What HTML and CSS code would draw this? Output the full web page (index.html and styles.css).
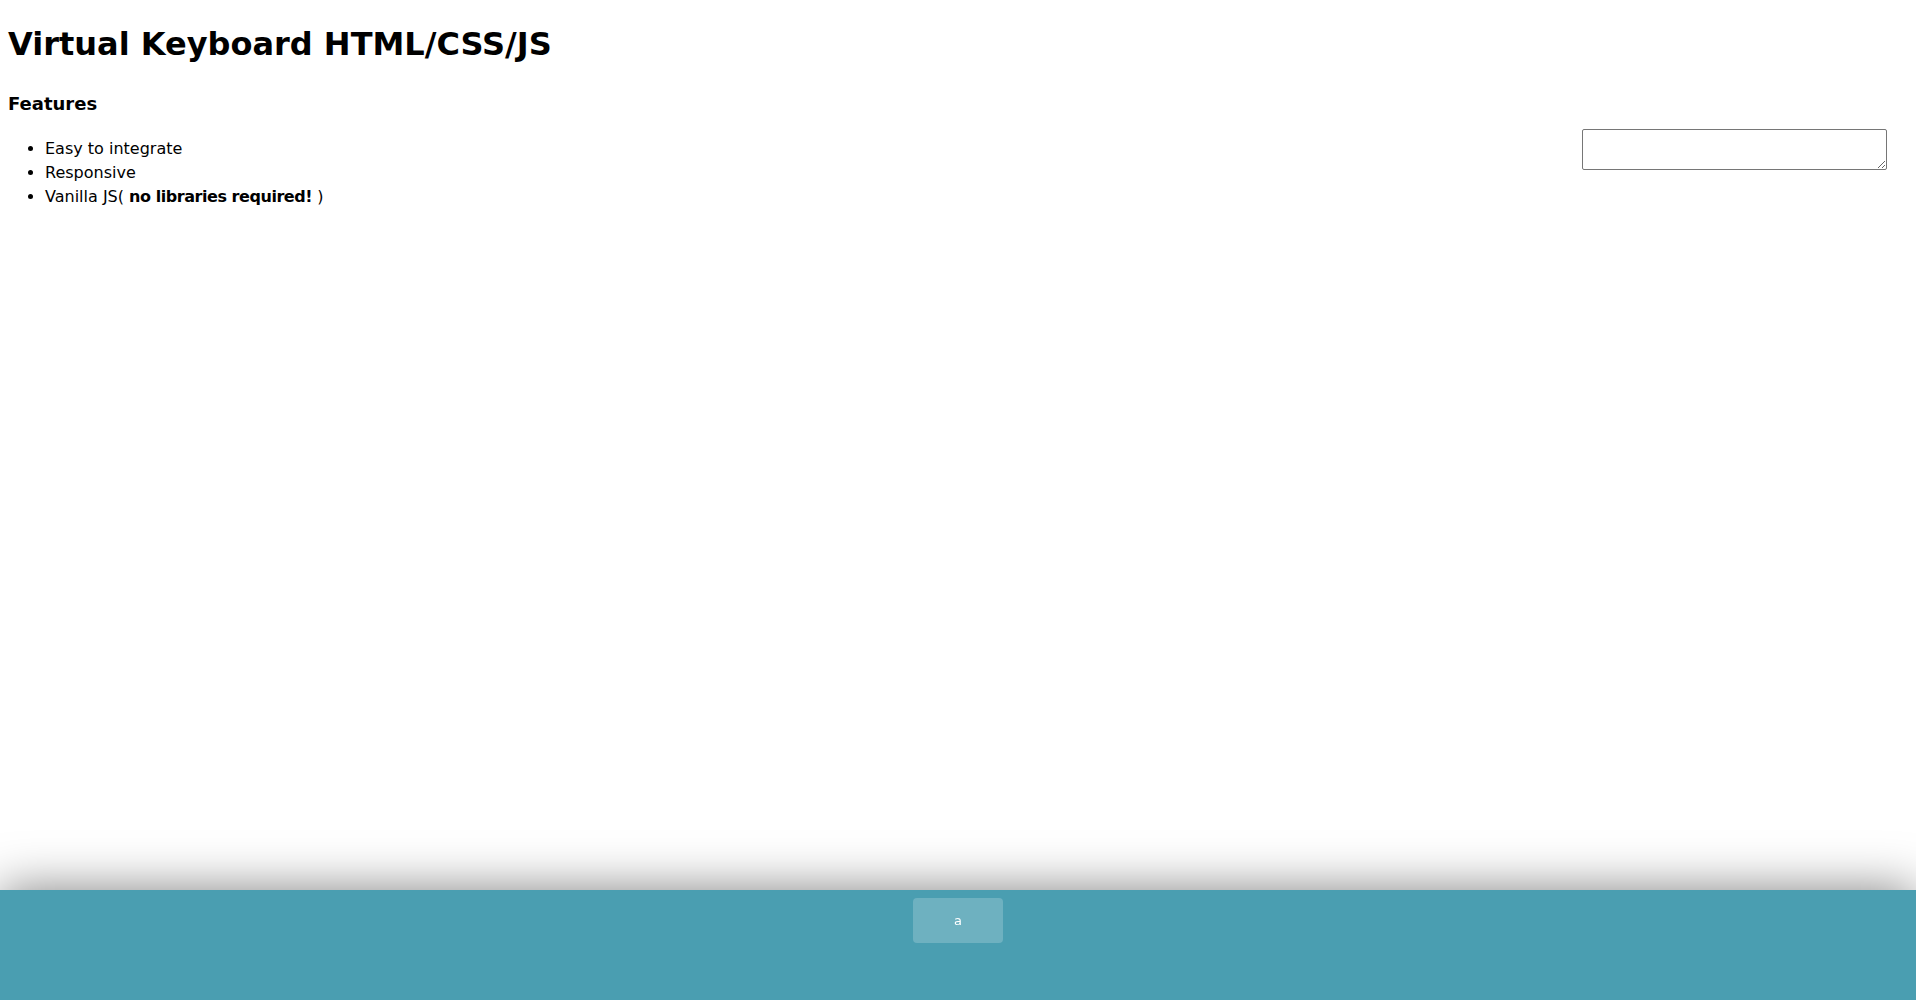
FILE: index.html
```html
<!DOCTYPE html>
<html lang="en">
<head>
<meta charset="utf-8">
<title>Virtual Keyboard</title>
<link rel="stylesheet" href="styles.css">
</head>
<body>
<div class="page">
  <h1 class="title">Virtual Keyboard HTML/CSS/JS</h1>
  <h2 class="subtitle">Features</h2>
  <div class="content">
    <ul class="features">
      <li>Easy to integrate</li>
      <li>Responsive</li>
      <li>Vanilla JS( <strong>no libraries required!</strong> )</li>
    </ul>
    <textarea class="use-keyboard-input"></textarea>
  </div>
</div>
<div class="keyboard">
  <div class="keyboard__keys">
    <button type="button" class="keyboard__key">a</button>
  </div>
</div>
</body>
</html>
```

FILE: styles.css
```css
html, body {
  margin: 0;
  padding: 0;
  background: #ffffff;
}

body {
  font-family: "DejaVu Sans", "Noto Sans", sans-serif;
  color: #000;
}

.page {
  padding: 0 8px;
}

.title {
  margin: 24.7px 0 0 0;
  font-size: 32px;
  line-height: 38.4px;
  font-weight: 700;
}

.subtitle {
  margin: 28.7px 0 0 0;
  font-size: 18px;
  line-height: 24px;
  font-weight: 700;
}

.content {
  display: flex;
  justify-content: space-between;
  align-items: flex-start;
}

.features {
  margin: 21.5px 0 0 0;
  padding-left: 37px;
  font-size: 16px;
  line-height: 23.7px;
}

.features strong {
  font-weight: 700;
  letter-spacing: -0.45px;
}

.use-keyboard-input {
  box-sizing: border-box;
  width: 305px;
  height: 41px;
  margin: 13.5px 21px 0 0;
  border: 1px solid #767676;
  border-radius: 2px;
  font-family: "Liberation Mono", monospace;
  font-size: 13px;
}

.keyboard {
  position: fixed;
  left: 0;
  bottom: 0;
  width: 100%;
  height: 110px;
  box-sizing: border-box;
  padding: 5px 0;
  background: #4a9eb1;
  box-shadow: 0 0 50px rgba(0, 0, 0, 0.5);
  user-select: none;
}

.keyboard__keys {
  text-align: center;
}

.keyboard__key {
  height: 45px;
  width: 6%;
  max-width: 90px;
  margin: 3px;
  border-radius: 4px;
  border: none;
  background: rgba(255, 255, 255, 0.2);
  color: #ffffff;
  font-family: "DejaVu Sans", sans-serif;
  font-size: 13px;
  outline: none;
  cursor: pointer;
  display: inline-flex;
  align-items: center;
  justify-content: center;
  vertical-align: top;
  padding: 0;
}
```
